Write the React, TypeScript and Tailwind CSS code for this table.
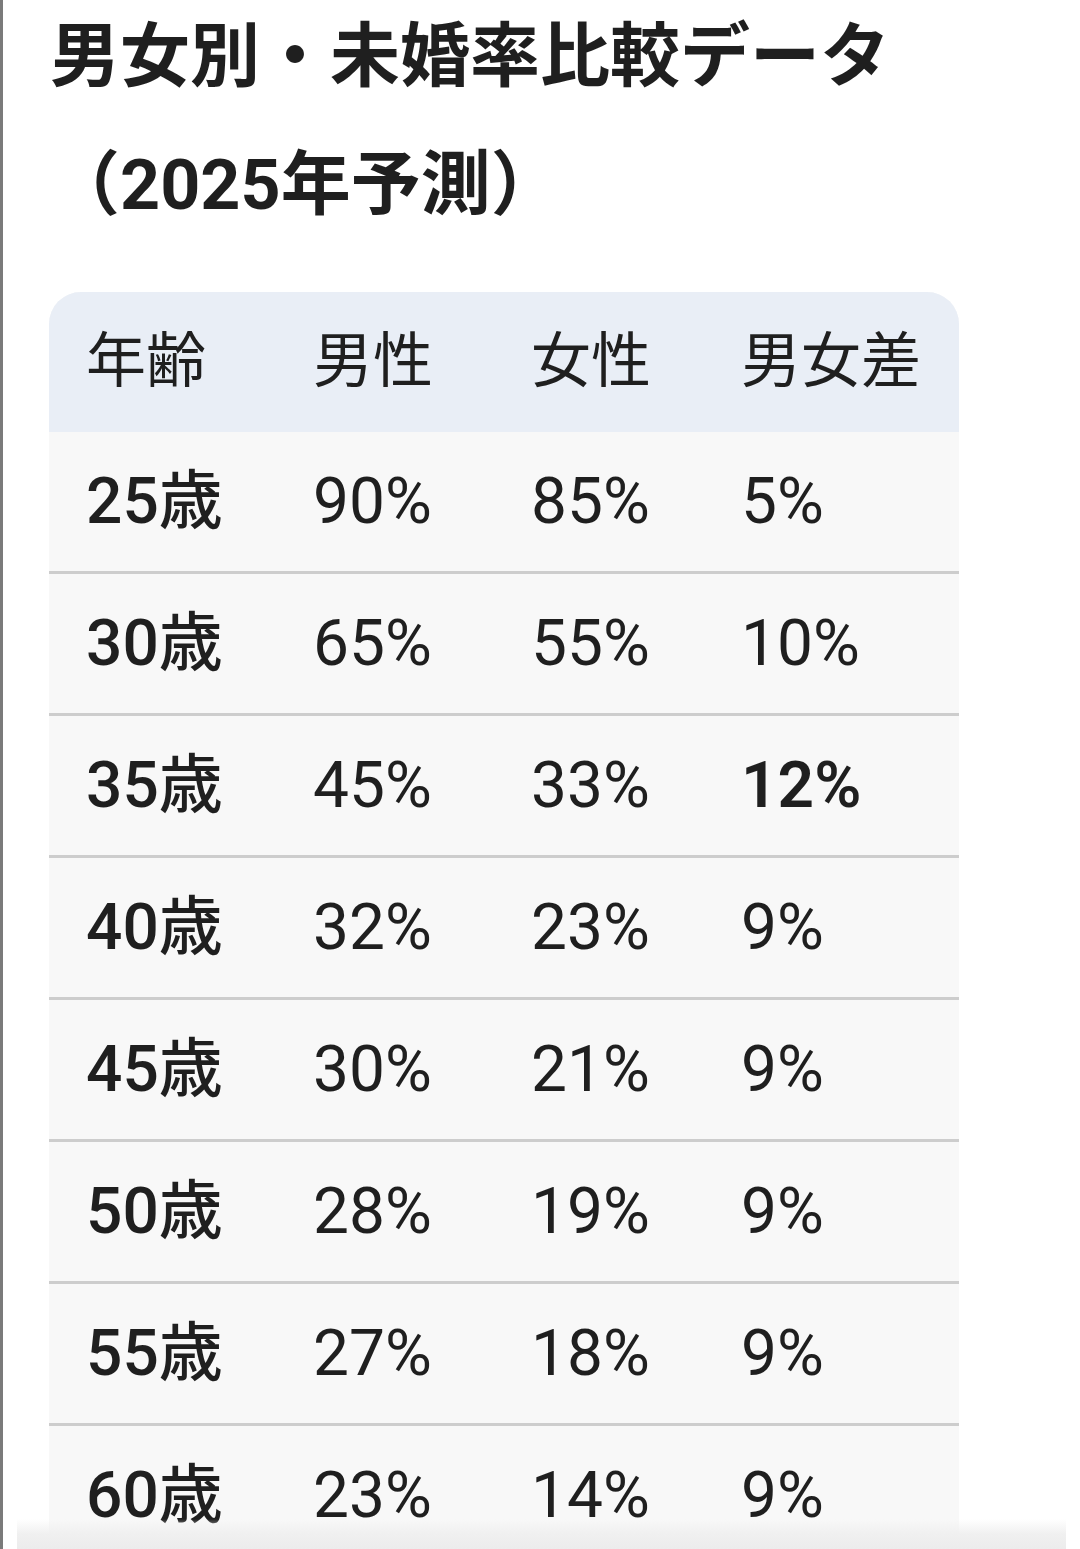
import React from 'react';

type Row = {
  age: string;
  male: string;
  female: string;
  diff: string;
  strong?: boolean;
};

const rows: Row[] = [
  { age: '25歳', male: '90%', female: '85%', diff: '5%' },
  { age: '30歳', male: '65%', female: '55%', diff: '10%' },
  { age: '35歳', male: '45%', female: '33%', diff: '12%', strong: true },
  { age: '40歳', male: '32%', female: '23%', diff: '9%' },
  { age: '45歳', male: '30%', female: '21%', diff: '9%' },
  { age: '50歳', male: '28%', female: '19%', diff: '9%' },
  { age: '55歳', male: '27%', female: '18%', diff: '9%' },
  { age: '60歳', male: '23%', female: '14%', diff: '9%' },
];

const font = "font-['Roboto','Noto_Sans_CJK_JP',sans-serif]";
const cols = 'grid grid-cols-[227px_218px_210px_255px]';

const App: React.FC = () => {
  return (
    <div className={`relative h-[1549px] overflow-hidden border-l-[3px] border-[#7a7a7a] bg-white text-[#1f1f1f] ${font}`}>
      <h1 className="-mt-[7px] pl-[47px] text-[70px] font-bold leading-[128px]">
        男女別・未婚率比較データ
        <br />
        （2025年予測）
      </h1>

      <div className="mt-[43px] ml-[46px] w-[910px] overflow-hidden rounded-t-[32px] bg-[#f8f8f8]">
        <div className={`${cols} h-[140px] items-center bg-[#e9eef6] text-[60px] leading-none`}>
          <div className="pl-[37px]">年齢</div>
          <div className="pl-[37px]">男性</div>
          <div className="pl-[37px]">女性</div>
          <div className="pl-[37px]">男女差</div>
        </div>

        {rows.map((r) => (
          <div
            key={r.age}
            className={`${cols} h-[142px] items-center border-b-[3px] border-[#cdcdcd] text-[64px] leading-none`}
          >
            <div className="pl-[37px] font-medium">{r.age}</div>
            <div className="pl-[37px]">{r.male}</div>
            <div className="pl-[37px]">{r.female}</div>
            <div className={`pl-[37px] ${r.strong ? 'font-semibold' : ''}`}>{r.diff}</div>
          </div>
        ))}
      </div>

      {/* bottom bar shadow peeking in */}
      <div className="absolute bottom-0 left-[14px] right-[14px] h-[30px] bg-gradient-to-b from-[#f6f6f6]/0 via-[#f0f0f0] to-[#ececec]" />
    </div>
  );
};

export default App;
